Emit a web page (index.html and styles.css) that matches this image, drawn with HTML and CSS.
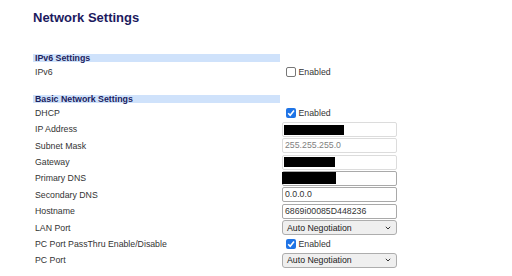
FILE: index.html
```html
<!DOCTYPE html>
<html>
<head>
<meta charset="utf-8">
<link rel="stylesheet" href="styles.css">
</head>
<body>
<div class="page">
  <h1 class="title">Network Settings</h1>

  <div class="section">
    <div class="band">IPv6 Settings</div>
    <div class="row">
      <div class="label">IPv6</div>
      <div class="value"><span class="check"></span><span class="check-text">Enabled</span></div>
    </div>
  </div>

  <div class="section second">
    <div class="band">Basic Network Settings</div>
    <div class="row">
      <div class="label">DHCP</div>
      <div class="value"><span class="check on"><svg viewBox="0 0 10 10" width="10" height="10"><path d="M2.2 5.2 L4.2 7.3 L8 2.6" fill="none" stroke="#fff" stroke-width="1.6"/></svg></span><span class="check-text">Enabled</span></div>
    </div>
    <div class="row">
      <div class="label">IP Address</div>
      <div class="value"><div class="field disabled"><span class="redact r-ip"></span></div></div>
    </div>
    <div class="row">
      <div class="label">Subnet Mask</div>
      <div class="value"><div class="field disabled">255.255.255.0</div></div>
    </div>
    <div class="row">
      <div class="label">Gateway</div>
      <div class="value"><div class="field disabled"><span class="redact r-gw"></span></div></div>
    </div>
    <div class="row">
      <div class="label">Primary DNS</div>
      <div class="value"><div class="field enabled"><span class="redact r-dns"></span></div></div>
    </div>
    <div class="row">
      <div class="label">Secondary DNS</div>
      <div class="value"><div class="field enabled">0.0.0.0</div></div>
    </div>
    <div class="row">
      <div class="label">Hostname</div>
      <div class="value"><div class="field enabled">6869i00085D448236</div></div>
    </div>
    <div class="row">
      <div class="label">LAN Port</div>
      <div class="value"><div class="select"><span>Auto Negotiation</span><svg class="chev" viewBox="0 0 6 4" width="6" height="4"><path d="M0.8 0.8 L3 3 L5.2 0.8" fill="none" stroke="#333" stroke-width="1"/></svg></div></div>
    </div>
    <div class="row">
      <div class="label">PC Port PassThru Enable/Disable</div>
      <div class="value"><span class="check on"><svg viewBox="0 0 10 10" width="10" height="10"><path d="M2.2 5.2 L4.2 7.3 L8 2.6" fill="none" stroke="#fff" stroke-width="1.6"/></svg></span><span class="check-text">Enabled</span></div>
    </div>
    <div class="row">
      <div class="label">PC Port</div>
      <div class="value"><div class="select"><span>Auto Negotiation</span><svg class="chev" viewBox="0 0 6 4" width="6" height="4"><path d="M0.8 0.8 L3 3 L5.2 0.8" fill="none" stroke="#333" stroke-width="1"/></svg></div></div>
    </div>
  </div>
</div>
</body>
</html>
```

FILE: styles.css
```css
* { box-sizing: border-box; }
html, body { margin: 0; padding: 0; background: #fff; }
body { font-family: "Liberation Sans", Arial, sans-serif; color: #333; }

.page {
  padding: 10px 0 0 33px;
  width: 398px;
}

.title {
  margin: 0;
  font-size: 13px;
  line-height: 16px;
  font-weight: bold;
  color: #1c1a5e;
}

.section { margin-top: 28.3px; }
.section.second { margin-top: 14.6px; }

.band {
  width: 247px;
  height: 8px;
  background: #cfe2fb;
  color: #1c2260;
  font-weight: bold;
  font-size: 8.8px;
  line-height: 8.4px;
  padding-left: 2px;
  margin-bottom: 1.8px;
  white-space: nowrap;
}

.row {
  display: grid;
  grid-template-columns: 249px 115px;
  height: 16.37px;
  align-items: center;
}

.label {
  padding-left: 2px;
  font-size: 8.75px;
  color: #333;
  white-space: nowrap;
}

.value {
  display: flex;
  align-items: center;
  height: 100%;
}

.check {
  width: 10px;
  height: 10px;
  margin-left: 4px;
  border: 1px solid #777;
  border-radius: 2px;
  background: #fff;
  display: flex;
  flex: none;
}
.check.on {
  border: none;
  background: #1f74e6;
}
.check svg { display: block; }

.check-text {
  margin-left: 2.5px;
  font-size: 8.75px;
  color: #333;
}

.field {
  width: 115px;
  height: 15px;
  border: 1px solid #c9c9c9;
  border-radius: 2px;
  background: #fff;
  font-size: 8.75px;
  line-height: 13px;
  padding-left: 2px;
  color: #333;
  display: flex;
  align-items: center;
  position: relative;
}
.field.disabled { border-color: #dcdcdc; color: #808080; }
.field.enabled { border-color: #a9a9a9; }

.redact { display: block; background: #000; position: absolute; }
.r-ip { left: 1px; top: 2.5px; width: 60px; height: 10px; }
.r-gw { left: 1px; top: 1.5px; width: 51px; height: 10px; }
.r-dns { left: -1px; top: 0.5px; width: 54px; height: 11.5px; }

.select {
  width: 115px;
  height: 14.7px;
  border: 1px solid #adadad;
  border-radius: 3px;
  background: #efefef;
  font-size: 8.75px;
  color: #222;
  display: flex;
  align-items: center;
  justify-content: space-between;
  padding: 0 5.5px 0 4px;
}
.chev { display: block; }
```
